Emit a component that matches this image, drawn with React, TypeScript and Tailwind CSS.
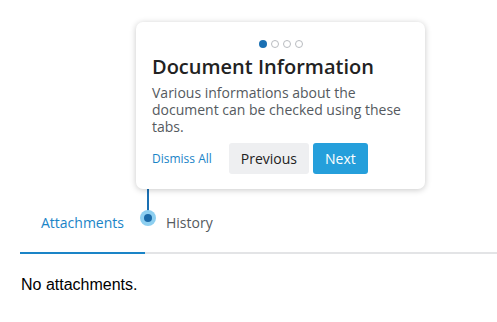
import { useState } from 'react'

const OPEN = { fontFamily: '"Open Sans", "Noto Sans", sans-serif' }
const ARIAL = { fontFamily: '"Liberation Sans", Arial, sans-serif' }

const TABS = ['Attachments', 'History']

function StepDots({ count, active }: { count: number; active: number }) {
  return (
    <div className="flex justify-center gap-[4px]">
      {Array.from({ length: count }).map((_, i) =>
        i === active ? (
          <span key={i} className="size-[8px] rounded-full bg-[#1a70b3]" />
        ) : (
          <span key={i} className="size-[8px] rounded-full border border-[#b9bcc0] bg-white" />
        )
      )}
    </div>
  )
}

function TourPopover() {
  return (
    <div
      className="absolute left-[136px] top-[22px] w-[289px] rounded-[7px] bg-white px-4 pb-[15px] pt-[18px] shadow-[0_1px_6px_rgba(0,0,0,0.22)]"
      style={OPEN}
    >
      <StepDots count={4} active={0} />
      <h2 className="mt-[5px] text-[20px] font-semibold leading-[28px] text-[#222]">
        Document Information
      </h2>
      <p className="mt-[3px] text-[14px] leading-[17px] text-[#555a60]">
        Various informations about the document can be checked using these tabs.
      </p>
      <div className="mt-[8px] flex items-center">
        <button type="button" className="text-[12px] text-[#1a84c7]">
          Dismiss All
        </button>
        <button
          type="button"
          className="ml-[17px] h-[31px] rounded-[3px] bg-[#eeeff1] px-3 text-[14px] text-[#222]"
        >
          Previous
        </button>
        <button
          type="button"
          className="ml-[4px] h-[31px] rounded-[3px] bg-[#259fdb] px-3 text-[14px] text-white"
        >
          Next
        </button>
      </div>
    </div>
  )
}

function Hotspot() {
  return (
    <>
      <div className="absolute left-[147px] top-[189px] h-[28px] w-[2px] bg-[#1a70b3]" />
      <div className="absolute left-[140px] top-[210px] flex size-[16px] items-center justify-center rounded-full bg-[#8dcff0]">
        <span className="size-[8px] rounded-full bg-[#1a6aa8]" />
      </div>
    </>
  )
}

export default function App() {
  const [tab, setTab] = useState(0)

  return (
    <div className="relative h-[322px] w-[497px] overflow-hidden bg-white">
      <div className="pl-[20px] pt-[196px]">
        <div className="flex border-b-2 border-[#e3e4e6]" style={OPEN}>
          {TABS.map((label, i) => (
            <button
              key={label}
              type="button"
              onClick={() => setTab(i)}
              className={
                i === tab
                  ? '-mb-[2px] h-[58px] border-b-2 border-[#1a84c7] px-[21px] pb-[3px] text-[14px] text-[#1a84c7]'
                  : '-mb-[2px] h-[58px] border-b-2 border-transparent px-[21px] pb-[3px] text-[14px] text-[#555a60]'
              }
            >
              {label}
            </button>
          ))}
        </div>
        <p className="mt-[21px] pl-[1px] text-[16px] leading-[19px] text-black" style={ARIAL}>
          No attachments.
        </p>
      </div>
      <Hotspot />
      <TourPopover />
    </div>
  )
}
